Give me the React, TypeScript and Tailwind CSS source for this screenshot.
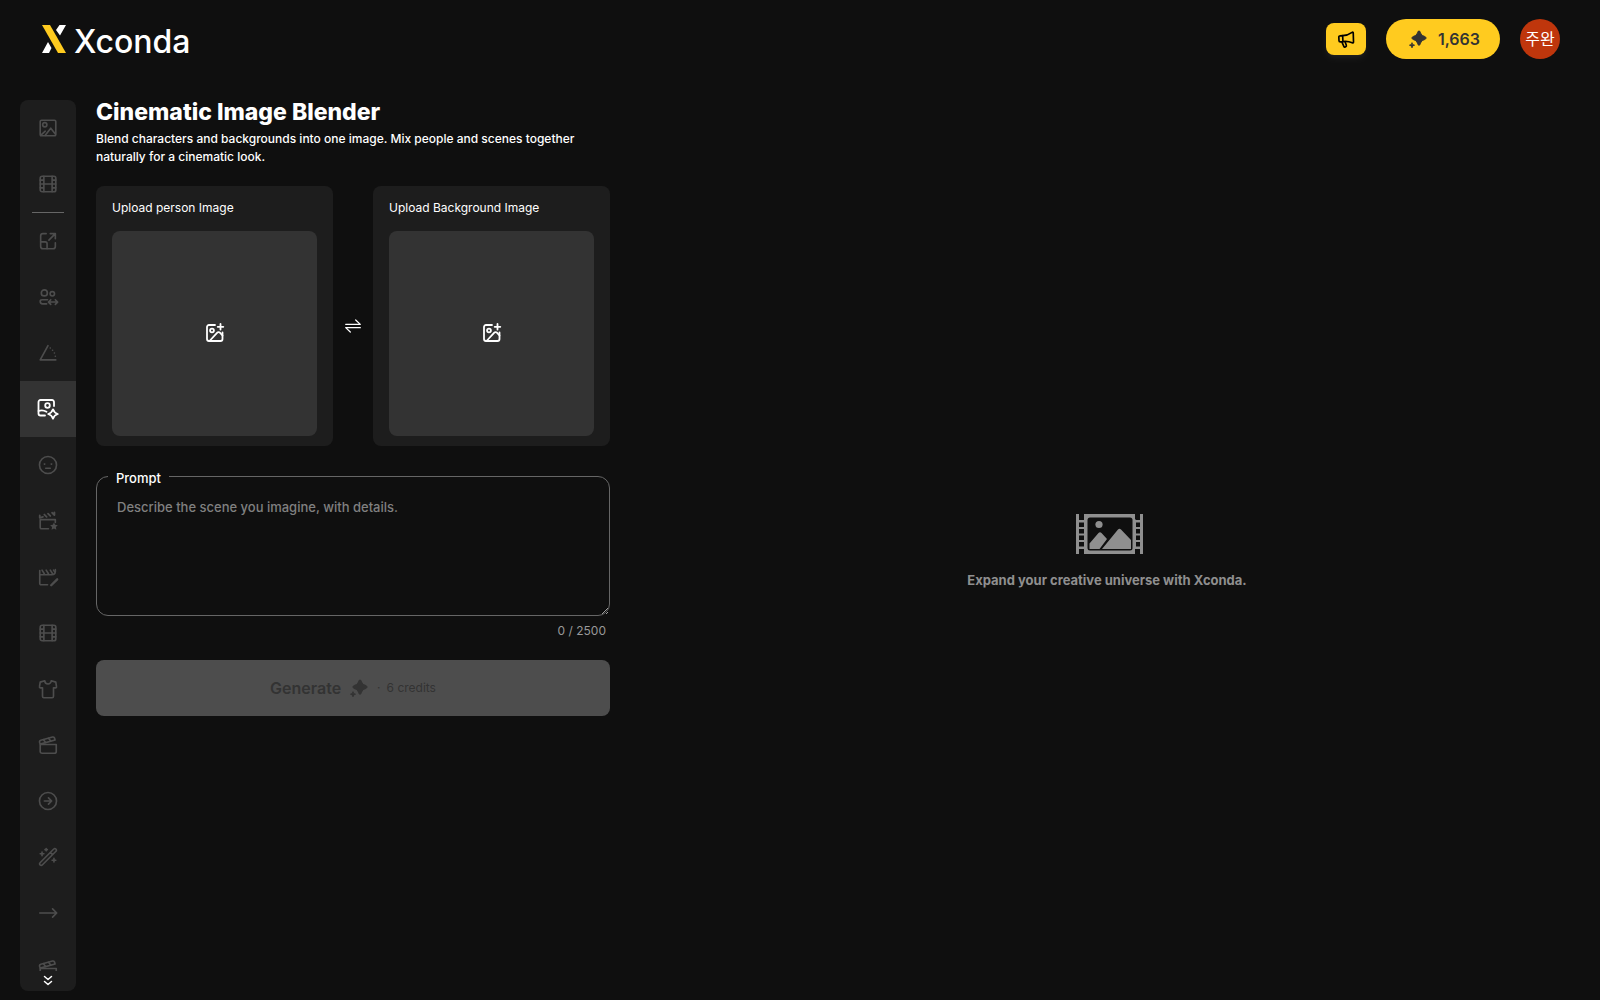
import { useState } from 'react';
import type { ReactNode } from 'react';

type IconProps = { className?: string };

type SidebarItem = {
  label: string;
  icon: ReactNode;
  active?: boolean;
};

const MAX_PROMPT = 2500;

function LineIcon({ className = 'size-[22px]', children }: IconProps & { children: ReactNode }) {
  return (
    <svg
      viewBox="0 0 24 24"
      fill="none"
      stroke="currentColor"
      strokeWidth="1.8"
      strokeLinecap="round"
      strokeLinejoin="round"
      className={className}
      aria-hidden="true"
    >
      {children}
    </svg>
  );
}

function PictureIcon() {
  return (
    <LineIcon>
      <rect x="3.500" y="3.500" width="17" height="17" rx="1.500" />
      <circle cx="8.500" cy="8.500" r="2.300" />
      <path d="m9 20 6-7.800 5 6.300M4 20l5-4.500" />
    </LineIcon>
  );
}

function FilmIcon() {
  return (
    <LineIcon>
      <rect x="3.500" y="3.500" width="17" height="17" rx="2" />
      <path d="M7.500 3.500v17M16.500 3.500v17M7.500 12h9M3.500 7.800h4M3.500 12h4M3.500 16.200h4M16.500 7.800h4M16.500 12h4M16.500 16.200h4" />
    </LineIcon>
  );
}

function ScaleIcon() {
  return (
    <LineIcon>
      <path d="M10 4H6.500A2.500 2.500 0 0 0 4 6.500V18a2.500 2.500 0 0 0 2.500 2.500h11A2.500 2.500 0 0 0 20 18v-4" />
      <path d="M4 13h5a2 2 0 0 1 2 2v5.500M14.500 4H20v5.500M20 4l-7 7" />
    </LineIcon>
  );
}

function PeopleSwapIcon() {
  return (
    <LineIcon>
      <circle cx="8" cy="7.500" r="3.300" />
      <circle cx="16.700" cy="8.500" r="2.400" />
      <path d="M10.500 19.500H6C4 19.500 3.500 18 3.500 16.700 3.500 15.500 4.500 15 5.500 15h6" />
      <path d="M13 17.500h9.500M15 15l-2.500 2.500L15 20M20 15l2.500 2.500L20 20" />
    </LineIcon>
  );
}

function AngleIcon() {
  return (
    <LineIcon>
      <path d="M12 4 3.500 19.500h17" />
      <path d="M14.500 6.500h.01M17 9h.01M19 12h.01M20 15.500h.01" />
    </LineIcon>
  );
}

function BlendIcon() {
  return (
    <LineIcon className="size-6">
      <path d="M18 9V5A2 2 0 0 0 16 3H4.500A2 2 0 0 0 2.500 5v11.500a2 2 0 0 0 2 2H9" />
      <circle cx="11.500" cy="8.500" r="2.300" />
      <path d="M2.500 14c3.500-1.500 5.500-.8 8 .8" />
      <path d="M17 12.300c.8 2.800 1.800 3.800 4.800 4.700-3 .9-4 1.900-4.800 4.700-.8-2.800-1.800-3.800-4.800-4.700 3-.9 4-1.900 4.800-4.700Z" />
    </LineIcon>
  );
}

function FaceIcon() {
  return (
    <LineIcon>
      <circle cx="12" cy="12" r="9.300" />
      <path d="M9.500 15.500h5M8 11h.5M15.500 11h.5" />
    </LineIcon>
  );
}

function ClapperStarIcon() {
  return (
    <LineIcon>
      <path d="M12.500 20.500H5A1.500 1.500 0 0 1 3.500 19v-8.500H20v3" />
      <path d="M3 8.500 6.500 7.500M8 5l2.500 2.500M12 4l2.500 2.500M16.500 3 19 5.500V2.500M3 8V6" strokeWidth="2" />
      <path
        d="m18.500 13.500 1.300 2.700 2.900.4-2.100 2 .5 2.900-2.600-1.400-2.600 1.400.5-2.900-2.100-2 2.900-.4Z"
        fill="currentColor"
        stroke="none"
      />
    </LineIcon>
  );
}

function ClapperPenIcon() {
  return (
    <LineIcon>
      <path d="M11.500 20.500h-7A1.500 1.500 0 0 1 3 19V5M3 9.500h13c2 0 4-1 4-3.500V4" />
      <path d="m5.500 4.500 2.500 4M10 4.500l2.500 4M14.500 4.500l2.500 4M18 4.500l1.500 2" />
      <path d="m15.500 21 6.500-6.500" strokeWidth="2.600" />
    </LineIcon>
  );
}

function ShirtIcon() {
  return (
    <LineIcon>
      <path d="M8.500 3 3.500 4.500 2.700 9.500a1 1 0 0 0 1 1.200H6V20a1.500 1.500 0 0 0 1.500 1.500h9A1.500 1.500 0 0 0 18 20v-9.300h2.300a1 1 0 0 0 1-1.200l-.8-5L15.500 3a3.500 3.500 0 0 1-7 0Z" />
    </LineIcon>
  );
}

function ClapperIcon() {
  return (
    <LineIcon>
      <path d="M3.500 11.500H21V19a2 2 0 0 1-2 2H5.500a2 2 0 0 1-2-2Z" />
      <path d="m3.500 11-.7-2a1.800 1.800 0 0 1 1.300-2.200L17 3.300a1.800 1.800 0 0 1 2.200 1.300l.5 2Z" />
      <path d="m7 6.200 2.500 3M12.500 4.700l2.500 3" />
    </LineIcon>
  );
}

function CircleArrowIcon() {
  return (
    <LineIcon>
      <circle cx="12" cy="12" r="9.300" />
      <path d="M8 12h8M12.500 8.500 16 12l-3.500 3.500" />
    </LineIcon>
  );
}

function WandIcon() {
  return (
    <LineIcon>
      <path d="M3.300 18.300 18.300 3.300a1.500 1.500 0 0 1 2.200 0l.2.200a1.500 1.500 0 0 1 0 2.200l-15 15a1.500 1.500 0 0 1-2.200 0l-.2-.2a1.500 1.500 0 0 1 0-2.200ZM14.500 7.100l2.400 2.400" />
      <path d="M5.500 6.500v4M3.500 8.500h4M10 2.700v2.600M8.700 4h2.600M18.500 13.500v4M16.500 15.500h4" />
    </LineIcon>
  );
}

function ArrowIcon() {
  return (
    <LineIcon>
      <path d="M3 12h18M17 7.500l4.500 4.500-4.500 4.500" />
    </LineIcon>
  );
}

function ImagePlusIcon() {
  return (
    <LineIcon className="size-6 text-white">
      <path d="M12 3H6a2 2 0 0 0-2 2v12a2 2 0 0 0 2 2h11.500a2 2 0 0 0 2-2v-6.500" />
      <circle cx="9" cy="8.500" r="1.900" />
      <path d="m6.500 19 7.800-8.300a1.800 1.800 0 0 1 2.600 0l2.600 2.800M17.500 2v5.600M14.700 4.800h5.600" />
    </LineIcon>
  );
}

function SparkleIcon({ className }: IconProps) {
  return (
    <svg viewBox="0 0 20 20" fill="currentColor" className={className} aria-hidden="true">
      <path d="M11 2c.8 0 1.100.5 1.400 1.400.8 2.300 1.600 3.100 3.900 3.900.9.300 1.700.8 1.700 1.700s-.8 1.400-1.700 1.700c-2.300.8-3.100 1.600-3.900 3.900-.3.900-.6 1.600-1.400 1.600s-1.100-.7-1.400-1.600c-.8-2.300-1.600-3.100-3.900-3.900C4.800 10.400 4 9.900 4 9s.8-1.400 1.700-1.700c2.300-.8 3.100-1.600 3.900-3.900.3-.9.600-1.400 1.400-1.400Z" stroke="currentColor" strokeLinejoin="round" />
      <path d="M4 13.700c.4 1.500.9 2 2.500 2.500-1.600.5-2.100 1-2.500 2.600-.4-1.600-.9-2.100-2.500-2.600 1.600-.5 2.100-1 2.500-2.500Z" stroke="currentColor" strokeLinejoin="round" />
    </svg>
  );
}

function MegaphoneIcon() {
  return (
    <LineIcon className="size-5">
      <path d="M8 8c4 0 7.800-1.400 11.300-3.900.7-.5 1.400-.2 1.400.7l.3 10.900c0 .9-.6 1.300-1.500.9-3.500-1.500-7.300-2.100-11.200-1.500" strokeWidth="2" />
      <path d="m8 8-3.200.2c-1 0-1.500.7-1.400 1.600l.2 4.200c0 .9.700 1.400 1.600 1.400l3.100-.3ZM7 15.500l2.400 5.300c.3.700.9 1 1.600.7l.7-.3c.7-.3.9-.9.7-1.600l-1.500-4.300" strokeWidth="2" />
    </LineIcon>
  );
}

function SwapIcon() {
  return (
    <LineIcon className="h-4 w-[18px] text-white">
      <path d="M1 9.500h22l-7-6.500M23 14.500H1L8 21" />
    </LineIcon>
  );
}

function FilmPictureIcon() {
  return (
    <svg viewBox="0 0 68 40" fill="#8f8f8f" className="ml-1.5 h-10 w-[68px]" aria-hidden="true">
      <path d="M0 0h3v5.500h5V0h51v5.500h5V0h3v40h-3v-5h-5v5H8v-5H3v5H0Z" />
      <path
        d="M14 3.500h40a2.500 2.500 0 0 1 2.500 2.500v28a2.500 2.500 0 0 1-2.500 2.500H14a2.500 2.500 0 0 1-2.500-2.500V6A2.500 2.500 0 0 1 14 3.500Z"
        fill="#0f0f0f"
      />
      {[8.5, 15, 21.5, 28].map((y) => (
        <g key={y} fill="#0f0f0f">
          <rect x="3" y={y} width="5" height="4.500" />
          <rect x="60" y={y} width="4" height="4.500" />
        </g>
      ))}
      <path d="M3 0h5v6H3ZM60 0h4v6h-4ZM3 35h5v5H3ZM60 35h4v5h-4Z" fill="#0f0f0f" />
      <circle cx="23" cy="10.500" r="3.600" />
      <path d="M13.500 35v-5.500l9-10.500q1.500-1.500 3 0l5.500 6-7.500 10ZM26 35l16-19.500q1.500-1.500 3 0L55 26v9Z" />
    </svg>
  );
}

const toolItems: SidebarItem[] = [
  { label: 'Upscale', icon: <ScaleIcon /> },
  { label: 'Character swap', icon: <PeopleSwapIcon /> },
  { label: 'Camera angle', icon: <AngleIcon /> },
  { label: 'Image blender', icon: <BlendIcon />, active: true },
  { label: 'Face', icon: <FaceIcon /> },
  { label: 'Scene effects', icon: <ClapperStarIcon /> },
  { label: 'Scene edit', icon: <ClapperPenIcon /> },
  { label: 'Video', icon: <FilmIcon /> },
  { label: 'Outfit', icon: <ShirtIcon /> },
  { label: 'Storyboard', icon: <ClapperIcon /> },
  { label: 'Next scene', icon: <CircleArrowIcon /> },
  { label: 'Magic', icon: <WandIcon /> },
  { label: 'Extend', icon: <ArrowIcon /> },
  { label: 'Clips', icon: <ClapperIcon /> }
];

function SidebarButton({ item }: { item: SidebarItem }) {
  return (
    <button
      type="button"
      aria-label={item.label}
      className={`flex h-14 w-full shrink-0 items-center justify-center ${
        item.active ? 'bg-[#333333] text-white' : 'text-[#4d4d4d] hover:text-white'
      }`}
    >
      {item.icon}
    </button>
  );
}

function Sidebar() {
  return (
    <nav className="flex w-14 shrink-0 flex-col overflow-hidden rounded-lg bg-[#1d1d1d]">
      <div className="flex min-h-0 flex-1 flex-col overflow-hidden">
        <SidebarButton item={{ label: 'Image', icon: <PictureIcon /> }} />
        <SidebarButton item={{ label: 'Video', icon: <FilmIcon /> }} />
        <hr className="mx-3 shrink-0 border-[#666666]" />
        {toolItems.map((item) => (
          <SidebarButton key={item.label} item={item} />
        ))}
      </div>
      <button type="button" aria-label="More tools" className="flex h-5 items-center justify-center text-white">
        <LineIcon className="size-3">
          <path d="m5 3 7 6 7-6M5 13l7 6 7-6" strokeWidth="3" />
        </LineIcon>
      </button>
    </nav>
  );
}

function Header() {
  return (
    <header className="flex h-[78px] shrink-0 items-center justify-between pr-10 pl-[42px]">
      <a href="#" className="flex items-center gap-2 text-white">
        <svg viewBox="0 0 24 28" className="h-7 w-6" aria-hidden="true">
          <path d="M14 5 17.500 0H24l-6 10.500ZM6 17l3.500 6L7 28H0Z" fill="#fff" />
          <path d="M0 0h8l16 28h-8Z" fill="#ffcb1f" />
        </svg>
        <span className="pt-1.5 text-[32px] leading-8 font-medium">Xconda</span>
      </a>
      <div className="flex items-center gap-5">
        <button
          type="button"
          aria-label="Announcements"
          className="flex h-8 w-10 items-center justify-center rounded-lg bg-[#ffcb1f] text-black shadow-md shadow-white/5"
        >
          <MegaphoneIcon />
        </button>
        <button
          type="button"
          className="flex h-10 items-center gap-2.5 rounded-full bg-[#ffcb1f] px-5 font-semibold text-[#333333]"
        >
          <SparkleIcon className="ml-0.5 size-5" />
          1,663
        </button>
        <button type="button" className="size-10 rounded-full bg-[#bf360c] text-base text-white">
          주완
        </button>
      </div>
    </header>
  );
}

function UploadCard({ id, label }: { id: string; label: string }) {
  return (
    <div className="flex-1 rounded-lg bg-[#1d1d1d] px-4 pt-3 pb-2.5">
      <p className="text-xs leading-5 text-white">{label}</p>
      <label
        htmlFor={id}
        className="mt-[13px] flex aspect-square cursor-pointer items-center justify-center rounded-lg bg-[#333333]"
      >
        <ImagePlusIcon />
        <input id={id} type="file" accept="image/*" aria-label={label} className="sr-only" />
      </label>
    </div>
  );
}

function BlenderForm() {
  const [prompt, setPrompt] = useState('');

  return (
    <form className="w-[514px] shrink-0">
      <h1 className="text-[23px] leading-6 font-extrabold text-white">Cinematic Image Blender</h1>
      <p className="mt-1.5 text-xs leading-[18px] font-medium text-white">
        Blend characters and backgrounds into one image. Mix people and scenes together naturally for a cinematic look.
      </p>

      <div className="mt-5 flex items-center">
        <UploadCard id="person-image" label="Upload person Image" />
        <button type="button" aria-label="Swap images" className="flex w-10 justify-center pt-5">
          <SwapIcon />
        </button>
        <UploadCard id="background-image" label="Upload Background Image" />
      </div>

      <div className="relative mt-[30px]">
        <label
          htmlFor="prompt"
          className="absolute -top-2 left-3 bg-[#0f0f0f] px-2 text-[13px] leading-5 font-medium text-white"
        >
          Prompt
        </label>
        <textarea
          id="prompt"
          value={prompt}
          maxLength={MAX_PROMPT}
          onChange={(event) => setPrompt(event.target.value)}
          placeholder="Describe the scene you imagine, with details."
          className="block h-[140px] w-full resize-y rounded-xl border border-[#666666] px-5 py-5 text-[13px] leading-5 font-medium text-white placeholder:text-[#808080]"
        />
      </div>
      <p className="mt-[7px] pr-1 text-right text-xs text-[#999999]">
        {prompt.length} / {MAX_PROMPT}
      </p>

      <button
        type="submit"
        disabled={prompt.length === 0}
        className="mt-[21px] flex h-14 w-full items-center justify-center rounded-lg bg-[#4d4d4d] text-[#333333]"
      >
        <span className="font-semibold">Generate</span>
        <SparkleIcon className="ml-2 size-5" />
        <span className="ml-2 text-xs">·</span>
        <span className="ml-1.5 text-xs">6 credits</span>
      </button>
    </form>
  );
}

export default function App() {
  return (
    <div className="flex h-screen flex-col bg-[#0f0f0f] font-['Inter','Noto_Sans_CJK_KR',sans-serif]">
      <Header />
      <div className="flex min-h-0 flex-1 gap-5 pt-[22px] pr-4 pb-[9px] pl-5">
        <Sidebar />
        <BlenderForm />
        <main className="flex flex-1 flex-col items-center justify-center gap-4 pt-3">
          <FilmPictureIcon />
          <p className="text-[13px] leading-5 font-bold text-[#8f8f8f]">Expand your creative universe with Xconda.</p>
        </main>
      </div>
    </div>
  );
}
